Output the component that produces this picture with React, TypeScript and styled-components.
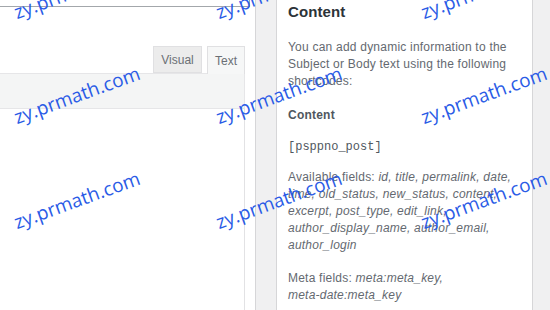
import React from "react";
import styled, { createGlobalStyle } from "styled-components";

const GlobalStyle = createGlobalStyle`
  html, body { margin: 0; padding: 0; background: #f0f0f1; overflow: hidden; }
  body { font-family: "Liberation Sans", Arial, sans-serif; }
  * { box-sizing: border-box; }
`;

const Page = styled.div`
  position: relative;
  display: flex;
  align-items: stretch;
  width: 550px;
  height: 310px;
  overflow: hidden;
  background: #f0f0f1;
`;

const MainColumn = styled.div`
  width: 256px;
  flex: none;
  display: flex;
  flex-direction: column;
  background: #fff;
  border-right: 1px solid #d6d6d8;
`;

const TitleInput = styled.div`
  width: 250px;
  height: 7px;
  border: 1px solid #a3a7ab;
  border-top: none;
  border-left: none;
`;

const EditorWrap = styled.div`
  margin-top: 39px;
  width: 245px;
  flex: 1;
  display: flex;
  flex-direction: column;
`;

const TabsRow = styled.div`
  display: flex;
  justify-content: flex-end;
  gap: 5px;
  position: relative;
  z-index: 1;
  margin-bottom: -1px;
`;

const Tab = styled.div<{ $active?: boolean }>`
  height: ${(p) => (p.$active ? 28 : 27)}px;
  width: ${(p) => (p.$active ? 38 : 49)}px;
  display: flex;
  align-items: center;
  justify-content: center;
  padding-top: 1px;
  font-size: 12px;
  color: #6b7075;
  background: ${(p) => (p.$active ? "#f6f7f7" : "#ececec")};
  border: 1px solid #e0e0e2;
  border-bottom: ${(p) => (p.$active ? "none" : "1px solid #e0e0e2")};
`;

const Toolbar = styled.div`
  height: 36px;
  background: #f4f5f5;
  border: 1px solid #e6e6e8;
  border-left: none;
`;

const EditorArea = styled.div`
  flex: 1;
  background: #fff;
  border-right: 1px solid #e2e2e4;
`;

const Sidebar = styled.div`
  margin-left: 20px;
  width: 257px;
  flex: none;
  background: #fff;
  border-left: 1px solid #d6d6d8;
  border-right: 1px solid #d6d6d8;
  padding: 2px 12px 0 11px;
  color: #646970;
  font-size: 12px;
  line-height: 17px;
  letter-spacing: 0.22px;
`;

const Heading = styled.h2`
  margin: 0;
  font-size: 15px;
  line-height: 20px;
  font-weight: 700;
  letter-spacing: 0.1px;
  color: #2c3338;
`;

const Para = styled.p<{ $gap?: number }>`
  margin: ${(p) => p.$gap ?? 16}px 0 0;
`;

const SubHeading = styled.p`
  margin: 17px 0 0;
  font-weight: 700;
  color: #50575e;
`;

const Code = styled.p`
  margin: 15px 0 0;
  font-family: "Liberation Mono", "Courier New", monospace;
  font-size: 12px;
  letter-spacing: 0;
  color: #50575e;
`;

const Em = styled.em`
  font-style: italic;
`;

const NoWrap = styled.span`
  white-space: nowrap;
`;

const Watermarks = styled.div`
  position: absolute;
  inset: 0;
  pointer-events: none;
  z-index: 10;
`;

const Mark = styled.span`
  position: absolute;
  font-family: "Open Sans", "Noto Sans", sans-serif;
  font-size: 19px;
  line-height: 1;
  color: #2a5be6;
  white-space: nowrap;
  transform-origin: 0 100%;
  transform: rotate(-20deg);
`;

const markCols = [18, 220, 425];
const markRows = [22, 127, 232];

export default function App() {
  return (
    <>
      <GlobalStyle />
      <Page>
        <MainColumn>
          <TitleInput />
          <EditorWrap>
            <TabsRow>
              <Tab>Visual</Tab>
              <Tab $active>Text</Tab>
            </TabsRow>
            <Toolbar />
            <EditorArea />
          </EditorWrap>
        </MainColumn>
        <Sidebar>
          <Heading>Content</Heading>
          <Para $gap={17}>
            You can add dynamic information to the Subject or Body text using
            the following shortcodes:
          </Para>
          <SubHeading>Content</SubHeading>
          <Code>[psppno_post]</Code>
          <Para $gap={13}>
            Available fields:{" "}
            <Em>
              id, title, permalink, date, time, old_status, new_status,
              content, excerpt, post_type, edit_link, author_display_name,
              author_email, author_login
            </Em>
          </Para>
          <Para $gap={16}>
            Meta fields:{" "}
            <Em>
              meta:meta_key, <NoWrap>meta-date:meta_key</NoWrap>
            </Em>
          </Para>
        </Sidebar>
        <Watermarks>
          {markRows.map((y) =>
            markCols.map((x) => (
              <Mark key={`${x}-${y}`} style={{ left: x, top: y - 19 }}>
                zy.prmath.com
              </Mark>
            ))
          )}
        </Watermarks>
      </Page>
    </>
  );
}
